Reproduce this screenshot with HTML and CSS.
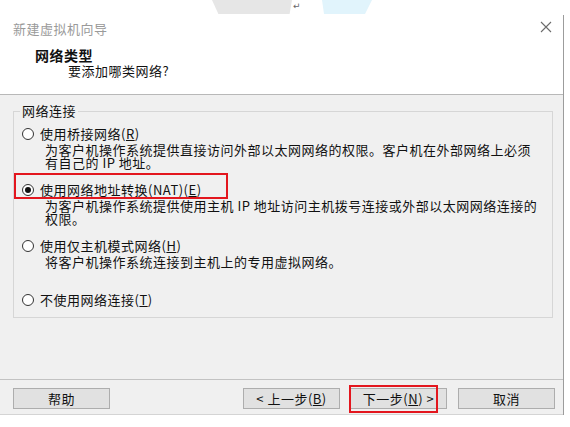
FILE: index.html
```html
<!DOCTYPE html>
<html lang="zh-CN">
<head>
<meta charset="utf-8">
<title>新建虚拟机向导</title>
<link rel="stylesheet" href="styles.css">
</head>
<body>
<div class="doc-strip">
  <span class="doc-shape grey"></span>
  <span class="doc-return">↵</span>
  <span class="doc-shape blue"></span>
</div>
<div class="dialog">
  <div class="titlebar">
    <span class="title">新建虚拟机向导</span>
    <svg class="close" viewBox="0 0 12 12" aria-label="关闭"><path d="M1 1L11 11M11 1L1 11" stroke="#6b6b6b" stroke-width="1.1" fill="none"/></svg>
  </div>
  <div class="header">
    <div class="h-title">网络类型</div>
    <div class="h-sub">要添加哪类网络?</div>
  </div>
  <div class="body">
    <fieldset class="group">
      <legend>网络连接</legend>
      <div class="option">
        <div class="opt-label"><span class="radio"></span>使用桥接网络(<u>R</u>)</div>
        <div class="opt-desc">为客户机操作系统提供直接访问外部以太网网络的权限。客户机在外部网络上必须<br>有自己的 IP 地址。</div>
      </div>
      <div class="option nat">
        <div class="opt-label"><span class="radio checked"></span>使用网络地址转换(NAT)(<u>E</u>)</div>
        <div class="opt-desc">为客户机操作系统提供使用主机 IP 地址访问主机拨号连接或外部以太网网络连接的<br>权限。</div>
        <span class="mark mark-nat"></span>
      </div>
      <div class="option">
        <div class="opt-label"><span class="radio"></span>使用仅主机模式网络(<u>H</u>)</div>
        <div class="opt-desc">将客户机操作系统连接到主机上的专用虚拟网络。</div>
      </div>
      <div class="option last">
        <div class="opt-label"><span class="radio"></span>不使用网络连接(<u>T</u>)</div>
      </div>
    </fieldset>
  </div>
  <div class="footer">
    <button class="btn help">帮助</button>
    <button class="btn">&lt; 上一步(<u>B</u>)</button>
    <button class="btn next">下一步(<u>N</u>) &gt;<span class="mark mark-next"></span></button>
    <button class="btn cancel">取消</button>
  </div>
</div>
</body>
</html>
```
FILE: styles.css
```css
* { box-sizing: border-box; }
html, body { margin: 0; padding: 0; }
body {
  width: 570px;
  height: 427px;
  overflow: hidden;
  background: #fff;
  font-family: "Noto Sans CJK SC", "Noto Sans", sans-serif;
  font-size: 13px;
  letter-spacing: 0.5px;
  color: #111;
}

.doc-strip {
  height: 15px;
  display: flex;
  align-items: flex-start;
  padding-left: 212px;
}
.doc-shape { display: block; height: 14px; }
.doc-shape.grey {
  width: 80px;
  background: #e6e6e6;
  clip-path: polygon(0 0, 100% 0, 97% 100%, 8% 100%);
}
.doc-shape.blue {
  width: 50px;
  background: #e1f4fc;
  clip-path: polygon(0 0, 100% 0, 86% 100%, 4% 100%);
}
.doc-return {
  width: 30px;
  font-family: "DejaVu Sans", sans-serif;
  font-size: 9px;
  line-height: 12px;
  color: #666;
  padding-left: 1px;
}

.dialog {
  width: 564px;
  border-right: 1px solid #9c9c9c;
  display: flex;
  flex-direction: column;
}
.titlebar {
  height: 26px;
  background: #fff;
  display: flex;
  align-items: center;
  justify-content: space-between;
  padding: 0 11px 0 13px;
}
.title { color: #9a9a9a; }
.close { width: 12px; height: 12px; display: block; margin-top: -2px; }

.header {
  height: 54px;
  background: #fff;
  border-bottom: 1px solid #b8b8b8;
  padding: 6px 0 0 35px;
}
.h-title { font-weight: bold; font-size: 14px; line-height: 16px; }
.h-sub { padding-left: 33px; line-height: 16px; }

.body {
  height: 284px;
  background: #f0f0f0;
  padding: 9px 10px 0 13px;
}
.group {
  margin: 0;
  min-width: 0;
  border: 1px solid #d6d6d6;
  padding: 8px 8px 9px 8px;
}
.group legend {
  padding: 0 2px;
  margin-left: -2px;
  line-height: 14px;
}

.option { position: relative; }
.option + .option { margin-top: 13px; }
.option.last { margin-top: 24px; }
.opt-label {
  height: 16px;
  line-height: 16px;
  display: flex;
  align-items: center;
  white-space: nowrap;
}
.opt-desc {
  margin-top: 1px;
  padding-left: 23px;
  line-height: 13px;
  white-space: nowrap;
}
.radio {
  flex: none;
  width: 12px;
  height: 12px;
  margin-right: 6px;
  border: 1px solid #333;
  border-radius: 50%;
  background: #fff;
  display: flex;
  align-items: center;
  justify-content: center;
}
.radio.checked::after {
  content: "";
  width: 6px;
  height: 6px;
  border-radius: 50%;
  background: #111;
}

.mark {
  position: absolute;
  border: 2px solid #e3161e;
  pointer-events: none;
}
.mark-nat { left: -8px; top: -9px; width: 214px; height: 26px; }
.mark-next { left: -2px; top: -4px; width: 89px; height: 28px; }

.footer {
  height: 36px;
  background: #f0f0f0;
  border-top: 1px solid #c2c2c2;
  border-bottom: 1px solid #d4d4d4;
  display: flex;
  align-items: flex-start;
  gap: 10px;
  padding: 8px 8px 0 13px;
}
.btn {
  position: relative;
  width: 97px;
  height: 21px;
  padding: 0;
  background: #e1e1e1;
  border: 1px solid #adadad;
  font: inherit;
  letter-spacing: inherit;
  line-height: 19px;
  color: #111;
  text-align: center;
}
.btn.help { margin-right: auto; }
.btn.cancel { margin-left: 1px; }
```
